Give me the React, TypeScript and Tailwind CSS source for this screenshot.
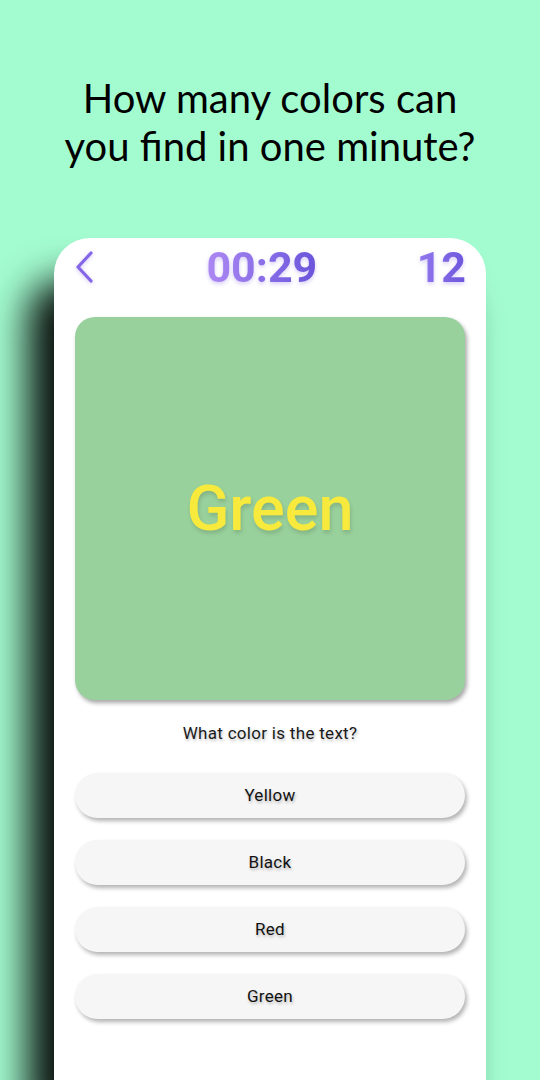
export default function App() {
  const options = ["Yellow", "Black", "Red", "Green"];
  return (
    <div className="w-[540px] h-[1080px] overflow-hidden bg-[#a3fcd0] flex flex-col items-center" style={{ fontFamily: "Roboto, 'Noto Sans', sans-serif" }}>
      <h1 className="pt-[74px] text-center text-[40px] leading-[48px] text-black font-normal" style={{ fontFamily: "Lato, 'Open Sans', sans-serif" }}>
        How many colors can
        <br />
        you find in one minute?
      </h1>
      <div className="mt-[68px] w-[432px] flex-1 bg-white rounded-t-[36px] shadow-[-26px_42px_38px_rgba(0,0,0,0.95)] px-[21px] flex flex-col">
        <div className="h-[58px] flex items-center justify-between">
          <svg width="22" height="34" viewBox="0 0 22 34" className="-ml-[2px] drop-shadow-[0_1px_2px_rgba(120,90,230,0.35)]">
            <polyline points="18,3 5,17 18,31" fill="none" stroke="#8466e6" strokeWidth="3.2" strokeLinecap="round" strokeLinejoin="round" />
          </svg>
          <div className="text-[43px] font-bold leading-none bg-gradient-to-r from-[#ad88f3] to-[#6b54db] bg-clip-text text-transparent drop-shadow-[0_2px_2px_rgba(120,90,230,0.3)] ml-[12px]">
            00:29
          </div>
          <div className="text-[43px] font-bold leading-none bg-gradient-to-r from-[#9479ee] to-[#6e56dc] bg-clip-text text-transparent drop-shadow-[0_2px_2px_rgba(120,90,230,0.3)] -mr-[1px]">
            12
          </div>
        </div>
        <div className="mt-[21px] h-[383px] rounded-[20px] bg-[#99d19c] shadow-[2px_3px_4px_rgba(0,0,0,0.35)] flex items-center justify-center">
          <span className="text-[63px] font-medium text-[#f8ea3c] mt-[2px]" style={{ textShadow: "1px 3px 4px rgba(0,0,0,0.15)" }}>
            Green
          </span>
        </div>
        <div className="mt-[24px] h-[20px] flex items-center justify-center text-[17px] text-[#1a1a1a] tracking-[0.3px]" style={{ textShadow: "1px 2px 3px rgba(0,0,0,0.25)" }}>
          What color is the text?
        </div>
        <div className="mt-[29px] flex flex-col gap-[22px]">
          {options.map((o) => (
            <div key={o} className="h-[45px] rounded-full bg-[#f6f6f6] shadow-[2px_3px_4px_rgba(0,0,0,0.3)] flex items-center justify-center text-[17px] text-[#111] tracking-[0.3px]" style={{ textShadow: "1px 2px 3px rgba(0,0,0,0.25)" }}>
              {o}
            </div>
          ))}
        </div>
      </div>
    </div>
  );
}
